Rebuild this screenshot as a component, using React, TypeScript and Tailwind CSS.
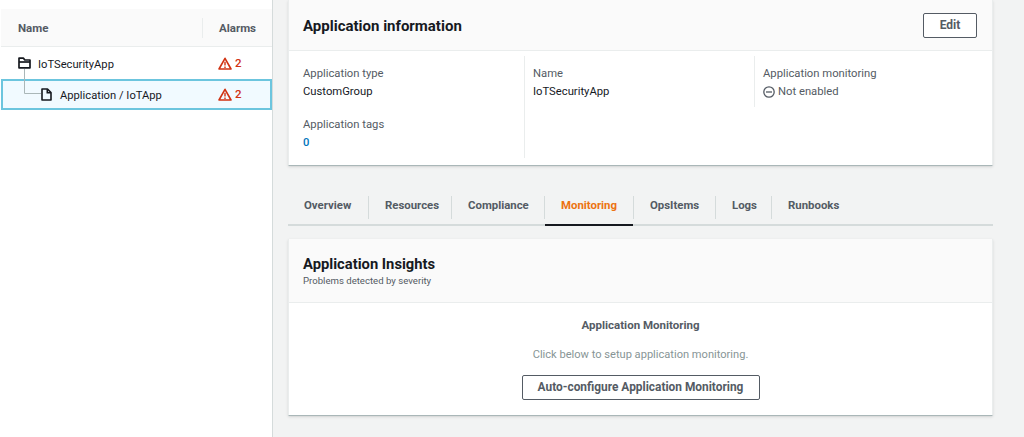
const tabs = [
    { label: 'Overview', width: 'w-[80px]' },
    { label: 'Resources', width: 'w-[82px]' },
    { label: 'Compliance', width: 'w-[92px]' },
    { label: 'Monitoring', width: 'w-[88px]', active: true },
    { label: 'OpsItems', width: 'w-[81px]' },
    { label: 'Logs', width: 'w-[55px]' },
    { label: 'Runbooks', width: 'w-[80px]' },
]

function AlarmCount() {
    return (
        <div className="flex items-center gap-[3px] text-[#d13212]">
            <svg width="14" height="13" viewBox="0 0 14 13" fill="none" stroke="#d13212" strokeWidth="1.6">
                <path d="M7 1.3 L13 12 H1 Z" strokeLinejoin="round" />
                <path d="M7 4.8 V8.6 M7 9.4 V10.9" strokeWidth="1.4" />
            </svg>
            <span className="text-[11.5px] font-medium">2</span>
        </div>
    )
}

function FolderIcon() {
    return (
        <svg width="13" height="12" viewBox="0 0 13 12" fill="none" stroke="#16191f" strokeWidth="1.7">
            <path d="M1 10.8 V1.2 H5.5 L6.8 3 H12 V10.8 Z" strokeLinejoin="round" />
            <path d="M1 5 H12" />
        </svg>
    )
}

function FileIcon() {
    return (
        <svg width="11" height="13" viewBox="0 0 11 13" fill="none" stroke="#16191f" strokeWidth="1.6">
            <path d="M1 1 H6.5 L10 4.5 V12 H1 Z" strokeLinejoin="round" />
            <path d="M6.3 1 V4.7 H10" />
        </svg>
    )
}

export default function App() {
    return (
        <div className="w-[1024px] h-[437px] overflow-hidden flex bg-[#f2f3f3] font-['Roboto',sans-serif] text-[#16191f]">
            {/* Left tree table */}
            <aside className="w-[273px] h-full pt-[9px] pl-px bg-white border-r border-[#d5dbdb] flex flex-col shrink-0">
                <div className="h-[38px] flex items-center bg-[#fafafa] border-b border-[#eaeded] text-[11.5px] font-bold text-[#545b64]">
                    <div className="w-[202px] pl-[17px] pt-[2px] border-r border-[#eaeded] h-[20px] flex items-center">Name</div>
                    <div className="pl-[16px] pt-[2px]">Alarms</div>
                </div>
                <div className="h-[31px] mt-px flex items-center relative">
                    <div className="w-[217px] pl-[17px] flex items-center gap-[7px] text-[11.2px]">
                        <FolderIcon />
                        <span className="pt-[3px]">IoTSecurityApp</span>
                    </div>
                    <AlarmCount />
                </div>
                <div className="h-[31px] flex items-center relative bg-[#f1faff] border-2 border-[#6cc5de]">
                    {/* connector from folder to child */}
                    <svg className="absolute left-[20px] -top-[12px]" width="18" height="26" fill="none" stroke="#aab7b8">
                        <path d="M1.5 0 V24.5 H18" />
                    </svg>
                    <div className="w-[215px] pl-[38px] flex items-center gap-[8px] text-[11.2px]">
                        <FileIcon />
                        <span className="pt-[3px]">Application / IoTApp</span>
                    </div>
                    <AlarmCount />
                </div>
            </aside>

            {/* Main content */}
            <main className="w-[720px] pl-[15px] pt-0 flex flex-col">
                <section className="w-[705px] h-[166px] bg-white border-b border-[#aab7b8] border-x border-x-[#eaeded] shadow-sm flex flex-col">
                    <div className="h-[51px] flex items-center justify-between pl-[14px] pr-[15px] bg-[#fafafa] border-b border-[#eaeded]">
                        <h2 className="text-[15px] font-bold pt-[3px]">Application information</h2>
                        <button className="w-[54px] h-[25px] bg-white border border-[#545b64] rounded-[2px] text-[12px] font-bold text-[#545b64]">Edit</button>
                    </div>
                    <div className="flex pt-[5px] text-[11.25px]">
                        <div className="w-[236px] h-[102px] pl-[14px] pt-[10px] border-r border-[#eaeded]">
                            <p className="text-[#545b64] leading-[16px]">Application type</p>
                            <p className="leading-[20px]">CustomGroup</p>
                            <p className="text-[#545b64] leading-[16px] mt-[15px]">Application tags</p>
                            <p className="leading-[20px] font-medium text-[#0073bb]">0</p>
                        </div>
                        <div className="w-[230px] h-[51px] pl-[8px] pt-[10px] border-r border-[#eaeded]">
                            <p className="text-[#545b64] leading-[16px]">Name</p>
                            <p className="leading-[20px]">IoTSecurityApp</p>
                        </div>
                        <div className="pl-[8px] pt-[10px]">
                            <p className="text-[#545b64] leading-[16px]">Application monitoring</p>
                            <p className="leading-[20px] text-[#545b64] flex items-center gap-[3px]">
                                <svg width="12" height="12" viewBox="0 0 12 12" fill="none" stroke="#545b64" strokeWidth="1.3">
                                    <circle cx="6" cy="6" r="5.2" />
                                    <path d="M3 6 H9" />
                                </svg>
                                Not enabled
                            </p>
                        </div>
                    </div>
                </section>

                {/* Tabs */}
                <nav className="w-[705px] h-[37px] mt-[23px] flex items-center border-b-2 border-[#d5dbdb] text-[11.4px] font-bold text-[#545b64]">
                    {tabs.map((tab, i) => (
                        <div key={tab.label} className="flex items-center">
                            {i > 0 && <span className="w-px h-[23px] bg-[#d5dbdb] -mb-px" />}
                            <div className={tab.active
                                ? `${tab.width} h-[37px] pl-[16px] pb-[2px] flex items-center text-[#ec7211] border-b-2 border-[#16191f] -mb-[2px]`
                                : `${tab.width} pl-[16px] pb-[2px] flex items-center`}>
                                {tab.label}
                            </div>
                        </div>
                    ))}
                </nav>

                {/* Application Insights card */}
                <section className="w-[705px] h-[177px] mt-[13px] bg-white border-b border-[#aab7b8] border-x border-x-[#eaeded] shadow-sm flex flex-col">
                    <div className="h-[64px] pl-[14px] pt-[16px] bg-[#fafafa] border-b border-[#eaeded]">
                        <h2 className="text-[14.75px] font-bold leading-[19px]">Application Insights</h2>
                        <p className="text-[9.6px] text-[#545b64] leading-[14px]">Problems detected by severity</p>
                    </div>
                    <div className="flex flex-col items-center pt-[14px]">
                        <p className="text-[11.5px] font-bold text-[#545b64] leading-[16px]">Application Monitoring</p>
                        <p className="text-[11.1px] text-[#879596] leading-[16px] mt-[14px]">Click below to setup application monitoring.</p>
                        <button className="w-[238px] h-[25px] mt-[12px] bg-white border border-[#545b64] rounded-[2px] text-[11.9px] font-bold text-[#545b64]">Auto-configure Application Monitoring</button>
                    </div>
                </section>
            </main>
        </div>
    )
}
